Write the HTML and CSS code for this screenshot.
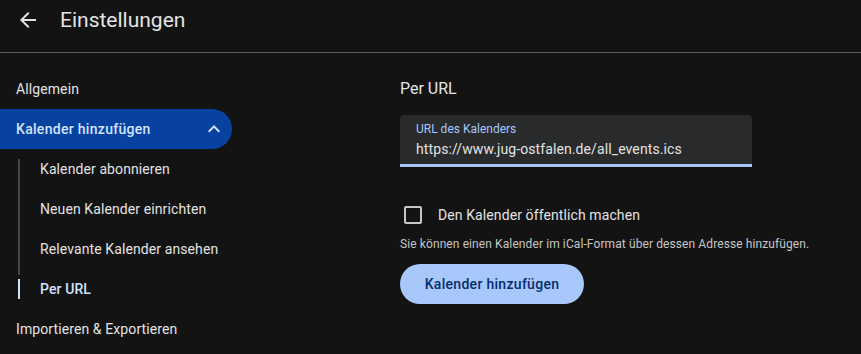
FILE: index.html
```html
<!DOCTYPE html>
<html lang="de">
<head>
<meta charset="utf-8">
<link rel="stylesheet" href="styles.css">
</head>
<body>
<header class="topbar">
  <button class="back" aria-label="Zurück">
    <svg width="24" height="24" viewBox="0 0 24 24"><path d="M20 11H7.83l5.59-5.59L12 4l-8 8 8 8 1.41-1.41L7.83 13H20v-2z" fill="#e3e3e3"/></svg>
  </button>
  <h1 class="title">Einstellungen</h1>
</header>
<div class="layout">
  <nav class="sidebar">
    <div class="nav-item">Allgemein</div>
    <div class="nav-item nav-active">
      <span>Kalender hinzufügen</span>
      <svg class="chev" width="24" height="24" viewBox="0 0 24 24"><path d="M7.41 15.41 12 10.83l4.59 4.58L18 14l-6-6-6 6z" fill="#d3e3fd"/></svg>
    </div>
    <div class="sub-list">
      <div class="sub-item sub-first"><span class="rail"></span><span class="sub-text">Kalender abonnieren</span></div>
      <div class="sub-item"><span class="rail"></span><span class="sub-text">Neuen Kalender einrichten</span></div>
      <div class="sub-item sub-third"><span class="rail"></span><span class="sub-text">Relevante Kalender ansehen</span></div>
      <div class="sub-item sub-active"><span class="rail"></span><span class="sub-text">Per URL</span></div>
    </div>
    <div class="nav-item">Importieren &amp; Exportieren</div>
  </nav>
  <main class="main">
    <h2 class="section-title">Per URL</h2>
    <div class="field">
      <label class="field-label">URL des Kalenders</label>
      <div class="field-value">https://www.jug-ostfalen.de/all_events.ics</div>
    </div>
    <div class="check-row">
      <span class="checkbox"></span>
      <span class="check-label">Den Kalender öffentlich machen</span>
    </div>
    <p class="help">Sie können einen Kalender im iCal-Format über dessen Adresse hinzufügen.</p>
    <button class="primary">Kalender hinzufügen</button>
  </main>
</div>
</body>
</html>
```
FILE: styles.css
```css
* { box-sizing: border-box; }
html, body { margin: 0; padding: 0; }
body {
  background: #131314;
  color: #e3e3e3;
  font-family: "Roboto", "Inter", sans-serif;
  width: 861px;
  height: 354px;
  overflow: hidden;
}
.topbar {
  height: 53px;
  border-bottom: 1px solid #5c5c5c;
  display: flex;
  align-items: center;
  padding-left: 16px;
  padding-bottom: 12px;
}
.back {
  background: none;
  border: 0;
  padding: 0;
  width: 24px;
  height: 24px;
  display: flex;
  margin-right: 20px;
}
.title {
  margin: 0;
  font-size: 21px;
  font-weight: 400;
  color: #e3e3e3;
}
.layout {
  display: flex;
}
.sidebar {
  width: 232px;
  padding-top: 16px;
  font-size: 14px;
  letter-spacing: 0.1px;
}
.nav-item {
  height: 40px;
  display: flex;
  align-items: center;
  padding-left: 16px;
  color: #e3e3e3;
}
.nav-active {
  background: #0842a0;
  color: #d3e3fd;
  border-radius: 0 20px 20px 0;
  justify-content: space-between;
  padding-right: 6px;
  font-weight: 500;
  letter-spacing: 0.3px;
}
.chev { display: block; }
.sub-list {
  display: flex;
  flex-direction: column;
}
.sub-item {
  height: 40px;
  display: flex;
  align-items: stretch;
  color: #e3e3e3;
}
.rail {
  width: 2px;
  margin-left: 18px;
  background: #444746;
}
.sub-first .rail { margin-top: 10px; }
.sub-third .rail { margin-bottom: -6px; }
.sub-active .rail {
  margin-top: 10px;
  margin-bottom: 10px;
  background: #d3e3fd;
}
.sub-text {
  display: flex;
  align-items: center;
  padding-left: 20px;
}
.sub-active .sub-text {
  color: #d3e3fd;
  font-weight: 500;
}
.main {
  margin-left: 168px;
  padding-top: 26px;
  width: 352px;
}
.section-title {
  margin: 0;
  font-size: 16px;
  font-weight: 400;
  color: #e3e3e3;
  line-height: 20px;
}
.field {
  margin-top: 16px;
  height: 52px;
  background: #282a2c;
  border-radius: 4px 4px 0 0;
  border-bottom: 3px solid #a8c7fa;
  padding: 6px 16px 0;
}
.field-label {
  display: block;
  font-size: 12px;
  line-height: 16px;
  color: #a8c7fa;
}
.field-value {
  font-size: 14px;
  line-height: 24px;
  color: #e3e3e3;
  letter-spacing: 0.1px;
}
.check-row {
  display: flex;
  align-items: center;
  margin-top: 38px;
  height: 20px;
}
.checkbox {
  width: 18px;
  height: 18px;
  border: 2px solid #c4c7c5;
  border-radius: 2px;
  margin-left: 4px;
  margin-right: 16px;
}
.check-label {
  font-size: 14px;
  color: #e3e3e3;
  letter-spacing: 0.1px;
}
.help {
  margin: 11px 0 0;
  font-size: 12px;
  line-height: 16px;
  color: #c4c7c5;
  white-space: nowrap;
  letter-spacing: 0.1px;
}
.primary {
  margin-top: 12px;
  height: 40px;
  width: 184px;
  border: 0;
  border-radius: 20px;
  background: #a8c7fa;
  color: #062e6f;
  font-family: "Roboto", "Inter", sans-serif;
  font-size: 14px;
  font-weight: 500;
  letter-spacing: 0.3px;
}
```
